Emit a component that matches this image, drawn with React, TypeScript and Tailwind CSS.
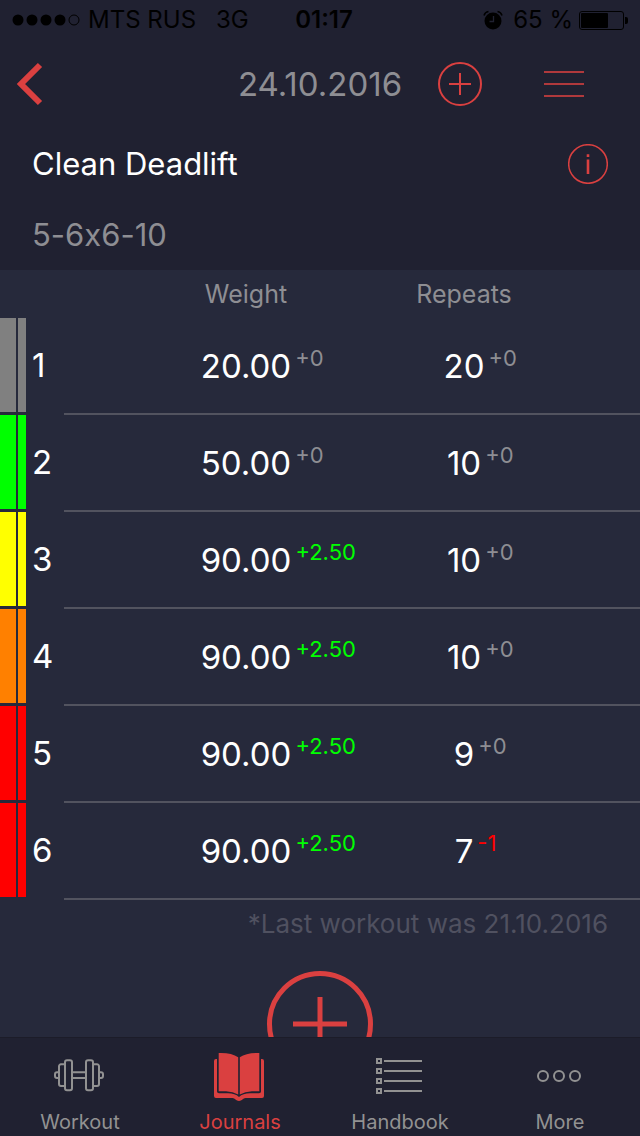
import React, { useState } from 'react';

type Delta = {
  text: string;
  color: string;
};

type WorkoutSet = {
  id: number;
  bar: string;
  weight: string;
  weightDelta: Delta;
  repeats: number;
  repeatsDelta: Delta;
};

const same: Delta = { text: '+0', color: 'text-[#8e8e93]' };
const heavier: Delta = { text: '+2.50', color: 'text-[#00ff00]' };
const fewer: Delta = { text: '-1', color: 'text-[#ff0000]' };

const sets: WorkoutSet[] = [
  { id: 1, bar: 'bg-[#808080]', weight: '20.00', weightDelta: same, repeats: 20, repeatsDelta: same },
  { id: 2, bar: 'bg-[#00ff00]', weight: '50.00', weightDelta: same, repeats: 10, repeatsDelta: same },
  { id: 3, bar: 'bg-[#ffff00]', weight: '90.00', weightDelta: heavier, repeats: 10, repeatsDelta: same },
  { id: 4, bar: 'bg-[#ff8000]', weight: '90.00', weightDelta: heavier, repeats: 10, repeatsDelta: same },
  { id: 5, bar: 'bg-[#ff0000]', weight: '90.00', weightDelta: heavier, repeats: 9, repeatsDelta: same },
  { id: 6, bar: 'bg-[#ff0000]', weight: '90.00', weightDelta: heavier, repeats: 7, repeatsDelta: fewer },
];

function DumbbellIcon() {
  return (
    <svg className="w-[52px] h-[52px]" viewBox="0 0 52 52" fill="none" stroke="currentColor" strokeWidth="2">
      <rect x="11" y="10.2" width="7" height="30" rx="2" />
      <rect x="32" y="10.2" width="7" height="30" rx="2" />
      <path d="M11 14.3H7a2 2 0 0 0-2 2V34a2 2 0 0 0 2 2h4M39 14.3h4a2 2 0 0 1 2 2V34a2 2 0 0 1-2 2h-4" />
      <path d="M5 22.3H3a2 2 0 0 0-2 2V26a2 2 0 0 0 2 2h2M45 22.3h2a2 2 0 0 1 2 2V26a2 2 0 0 1-2 2h-2" />
      <path d="M18 22.3h14M18 28h14" />
    </svg>
  );
}

function BookIcon() {
  return (
    <svg className="w-[52px] h-[52px]" viewBox="0 0 52 52" fill="currentColor">
      <path d="M2 9h46a2 2 0 0 1 2 2v35a2 2 0 0 1-2 2H31.5C29 48 28 51 25 51s-4-3-6.5-3H2a2 2 0 0 1-2-2V11a2 2 0 0 1 2-2Z" />
      <path className="fill-[#202131]" d="M3 0v41.5Q3 43.3 5 43.3h9Q21 43.3 25 47Q29 43.3 36 43.3h9Q47 43.3 47 41.5V0Z" />
      <path d="M4.7 3H7Q18 3 24.2 7.3V44.5Q19 41.5 12 41.3H4.7Z" />
      <path d="M45.3 3H43Q32 3 25.8 7.3V44.5Q31 41.5 38 41.3h7.3Z" />
    </svg>
  );
}

function ListIcon() {
  return (
    <svg className="w-[52px] h-[52px]" viewBox="0 0 52 52" fill="none" stroke="currentColor" strokeWidth="2">
      {[11, 21, 31, 41].map((y) => (
        <g key={y}>
          <rect x="3" y={y - 2} width="4" height="4" />
          <path d={`M10 ${y}h38`} />
        </g>
      ))}
    </svg>
  );
}

function MoreIcon() {
  return (
    <svg className="w-[52px] h-[52px]" viewBox="0 0 52 52" fill="none" stroke="currentColor" strokeWidth="2">
      <circle cx="9" cy="26" r="5" />
      <circle cx="25" cy="26" r="5" />
      <circle cx="41" cy="26" r="5" />
    </svg>
  );
}

const tabs = [
  { name: 'Workout', icon: DumbbellIcon },
  { name: 'Journals', icon: BookIcon },
  { name: 'Handbook', icon: ListIcon },
  { name: 'More', icon: MoreIcon },
];

function StatusBar() {
  return (
    <div className="grid grid-cols-[1fr_auto_1fr] items-center h-10 pl-3 pr-1 text-[24px] leading-6 text-black">
      <div className="flex items-center">
        <svg className="w-[68px] h-3" viewBox="0 0 68 12">
          <circle cx="6" cy="6" r="5.5" />
          <circle cx="20" cy="6" r="5.5" />
          <circle cx="34" cy="6" r="5.5" />
          <circle cx="48" cy="6" r="5.5" />
          <circle cx="62" cy="6" r="5" fill="none" stroke="black" />
        </svg>
        <span className="ml-2">MTS RUS</span>
        <span className="ml-5">3G</span>
      </div>
      <span className="font-semibold">01:17</span>
      <div className="flex items-center justify-end pr-2">
        <svg className="w-5 h-5" viewBox="0 0 20 20">
          <circle cx="10" cy="11" r="8.5" />
          <path d="M1 5.5Q2 2 5.5 1.500M19 5.500Q18 2 14.500 1.500" fill="none" stroke="black" strokeWidth="1.5" />
          <path d="M10.5 6v5.500H6.500" fill="none" stroke="#202131" strokeWidth="1.3" />
        </svg>
        <span className="ml-2.5">65 %</span>
        <svg className="w-[49px] h-5 ml-1.5" viewBox="0 0 49 20">
          <rect x="0.5" y="1.5" width="44" height="18" rx="2.5" fill="none" stroke="black" />
          <rect x="2" y="3" width="27" height="15" rx="1" />
          <path d="M46 7h1q2 0 2 2v3q0 2-2 2h-1z" />
        </svg>
      </div>
    </div>
  );
}

function ValueCell({ value, delta }: { value: string | number; delta: Delta }) {
  return (
    <div className="flex justify-center text-[33px] leading-10">
      <span>{value}</span>
      {/* zero width keeps the value itself centered */}
      <span className={`w-0 pl-1 -mr-1 whitespace-nowrap text-[22px] leading-6 ${delta.color}`}>{delta.text}</span>
    </div>
  );
}

export default function App() {
  const [activeTab, setActiveTab] = useState('Journals');

  return (
    <div className="flex flex-col h-screen bg-[#26293b] text-white font-[Inter,'Liberation_Sans',sans-serif]">
      <header className="shrink-0 bg-[#202131]">
        <StatusBar />

        <div className="grid grid-cols-[1fr_auto_1fr] items-center h-[88px]">
          <button aria-label="Back" className="justify-self-start ml-4 cursor-pointer text-[#da4040]">
            <svg className="w-7 h-11" viewBox="0 0 28 44" fill="none" stroke="currentColor" strokeWidth="6">
              <path d="M24 3L5 22l19 19" />
            </svg>
          </button>
          <h1 className="text-[33px] leading-10 text-[#8e8e93]">24.10.2016</h1>
          <div className="flex items-center justify-between pl-9 pr-14">
            <button aria-label="Add" className="cursor-pointer text-[#da4040]">
              <svg className="w-11 h-11" viewBox="0 0 44 44" fill="none" stroke="currentColor" strokeWidth="2">
                <circle cx="22" cy="22" r="21" />
                <path d="M11 22h22M22 11v22" />
              </svg>
            </button>
            <button aria-label="Menu" className="cursor-pointer text-[#b0393c]">
              <svg className="w-10 h-7" viewBox="0 0 40 28" fill="none" stroke="currentColor" strokeWidth="2">
                <path d="M0 2h40M0 14h40M0 26h40" />
              </svg>
            </button>
          </div>
        </div>

        <div className="flex items-center justify-between h-[72px] px-8">
          <h2 className="text-[31px] leading-10">Clean Deadlift</h2>
          <button aria-label="Info" className="cursor-pointer text-[#da4040]">
            <svg className="w-10 h-10" viewBox="0 0 40 40" fill="none" stroke="currentColor">
              <circle cx="20" cy="20" r="19.3" strokeWidth="1.5" />
              <path d="M20 10.3v2.7M20 15.5v14.5" strokeWidth="2.6" />
            </svg>
          </button>
        </div>
        {/* calt would turn the x between digits into a multiplication sign */}
        <p className="flex items-center h-[70px] px-8 text-[31px] leading-10 text-[#8e8e93] [font-feature-settings:'calt'_0]">
          5-6x6-10
        </p>
      </header>

      <main className="flex-1 min-h-0 overflow-y-auto [scrollbar-width:none]">
        <table className="w-full table-fixed border-separate border-spacing-0">
          <thead>
            <tr className="h-12 text-[25px] leading-8 text-[#8e8e93]">
              <td className="w-16 p-0"></td>
              <th scope="col" className="w-[45%] p-0 pl-19 font-normal">Weight</th>
              <th scope="col" className="p-0 pr-16 font-normal">Repeats</th>
            </tr>
          </thead>
          <tbody>
            {sets.map((set) => (
              <tr key={set.id} className="h-[97px]">
                <th scope="row" className="p-0 align-top font-normal">
                  <div className="flex items-center h-[94px] text-[33px] leading-10">
                    <span className={`w-4 h-full ${set.bar}`}></span>
                    <span className={`w-2 h-full ml-0.5 ${set.bar}`}></span>
                    <span className="ml-1.5">{set.id}</span>
                  </div>
                </th>
                <td className="p-0 pl-19 border-b-2 border-[#52535f]">
                  <ValueCell value={set.weight} delta={set.weightDelta} />
                </td>
                <td className="p-0 pr-16 border-b-2 border-[#52535f]">
                  <ValueCell value={set.repeats} delta={set.repeatsDelta} />
                </td>
              </tr>
            ))}
          </tbody>
        </table>

        <p className="py-2 px-8 text-right text-[26px] leading-8 text-[#505160]">*Last workout was 21.10.2016</p>

        <button aria-label="Add set" className="block mx-auto mt-[22px] cursor-pointer text-[#da4040]">
          <svg className="w-27 h-27" viewBox="0 0 108 108" fill="none" stroke="currentColor" strokeWidth="5">
            <circle cx="54" cy="54" r="50.5" />
            <path d="M27 54h54M54 27v54" />
          </svg>
        </button>
      </main>

      <nav className="grid grid-cols-4 shrink-0 h-[99px] bg-[#202131] border-t border-[#1c1c29]">
        {tabs.map(({ name, icon: Icon }) => (
          <button
            key={name}
            onClick={() => setActiveTab(name)}
            className={`flex flex-col items-center pt-3 cursor-pointer ${activeTab === name ? 'text-[#da4040]' : 'text-[#929292]'}`}
          >
            <Icon />
            <span className="mt-2 text-[20px] leading-6">{name}</span>
          </button>
        ))}
      </nav>
    </div>
  );
}
